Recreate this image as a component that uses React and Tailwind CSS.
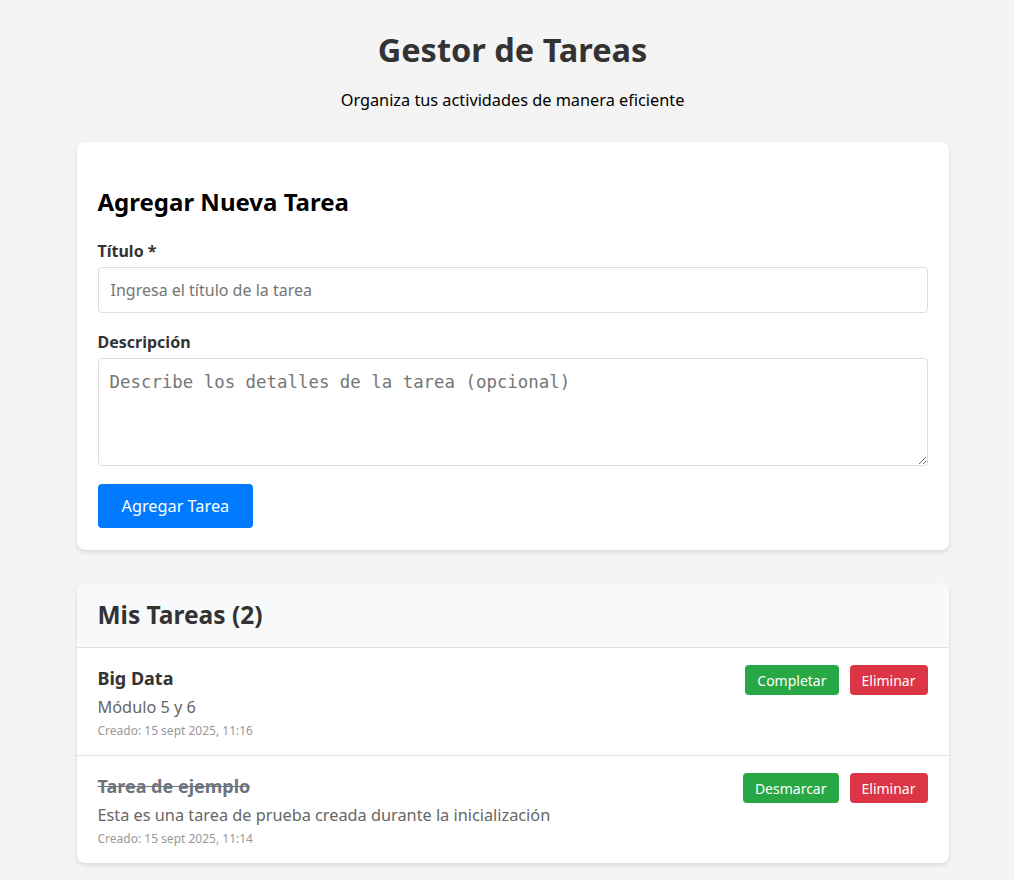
export default function App() {
  return (
    <div className="min-h-[880px] bg-[#f4f4f4] pt-[28px] pb-[18px] pl-[11px]" style={{ fontFamily: '"Noto Sans", sans-serif' }}>
      <div className="mx-auto w-[872px]">
        <header className="text-center">
          <h1 className="text-[32.5px] leading-[44px] font-bold text-[#333]">Gestor de Tareas</h1>
          <p className="mt-[16px] text-[16.3px] leading-[24px] text-black">Organiza tus actividades de manera eficiente</p>
        </header>

        <section className="mt-[30px] rounded-lg bg-white px-[21px] pt-[44px] pb-[22px] shadow-[0_2px_4px_rgba(0,0,0,0.12)]">
          <h2 className="text-[24px] leading-[32px] font-bold text-black">Agregar Nueva Tarea</h2>
          <label className="mt-[22px] block text-[16px] leading-[22px] font-bold text-[#333]">Título *</label>
          <input
            className="mt-[5px] block h-[46px] w-full rounded-[4px] border border-[#ddd] px-[12px] text-[16px] text-[#333] outline-none placeholder:text-[#757575]"
            placeholder="Ingresa el título de la tarea"
          />
          <label className="mt-[18px] block text-[16px] leading-[22px] font-bold text-[#333]">Descripción</label>
          <textarea
            className="mt-[5px] block h-[108px] w-full rounded-[4px] border border-[#ddd] px-[11px] py-[10px] text-[17.4px] leading-[26px] text-[#333] outline-none placeholder:text-[#757575]"
            style={{ fontFamily: '"DejaVu Sans Mono", monospace' }}
            placeholder="Describe los detalles de la tarea (opcional)"
          />
          <button className="mt-[18px] h-[44px] rounded-[4px] bg-[#007bff] px-[24px] text-[16.3px] text-white">Agregar Tarea</button>
        </section>

        <section className="mt-[33px] overflow-hidden rounded-lg bg-white shadow-[0_2px_4px_rgba(0,0,0,0.12)]">
          <div className="flex h-[65px] items-center border-b border-[#dee2e6] bg-[#f8f9fa] px-[21px]">
            <h2 className="text-[24.5px] leading-[32px] font-bold text-[#333]">Mis Tareas (2)</h2>
          </div>
          <TaskItem
            title="Big Data"
            desc="Módulo 5 y 6"
            date="Creado: 15 sept 2025, 11:16"
            action="Completar"
            done={false}
            border
          />
          <TaskItem
            title="Tarea de ejemplo"
            desc="Esta es una tarea de prueba creada durante la inicialización"
            date="Creado: 15 sept 2025, 11:14"
            action="Desmarcar"
            done
          />
        </section>
      </div>
    </div>
  );
}

function TaskItem({ title, desc, date, action, done, border }) {
  return (
    <div className={"flex items-start justify-between px-[21px] pt-[16px] pb-[15px] " + (border ? "border-b border-[#e0e0e0]" : "")}>
      <div>
        <h3 className={"text-[18px] leading-[28px] font-bold " + (done ? "text-[#6c757d] line-through" : "text-[#333]")}>{title}</h3>
        <p className="mt-[3px] text-[16.3px] leading-[24px] text-[#666]">{desc}</p>
        <p className="mt-[3px] text-[12px] leading-[18px] text-[#999]">{date}</p>
      </div>
      <div className="mt-[1px] flex gap-[11px]">
        <button className="h-[30px] rounded-[4px] bg-[#28a745] px-[12px] text-[14px] text-white">{action}</button>
        <button className="h-[30px] rounded-[4px] bg-[#dc3545] px-[12px] text-[14px] text-white">Eliminar</button>
      </div>
    </div>
  );
}
